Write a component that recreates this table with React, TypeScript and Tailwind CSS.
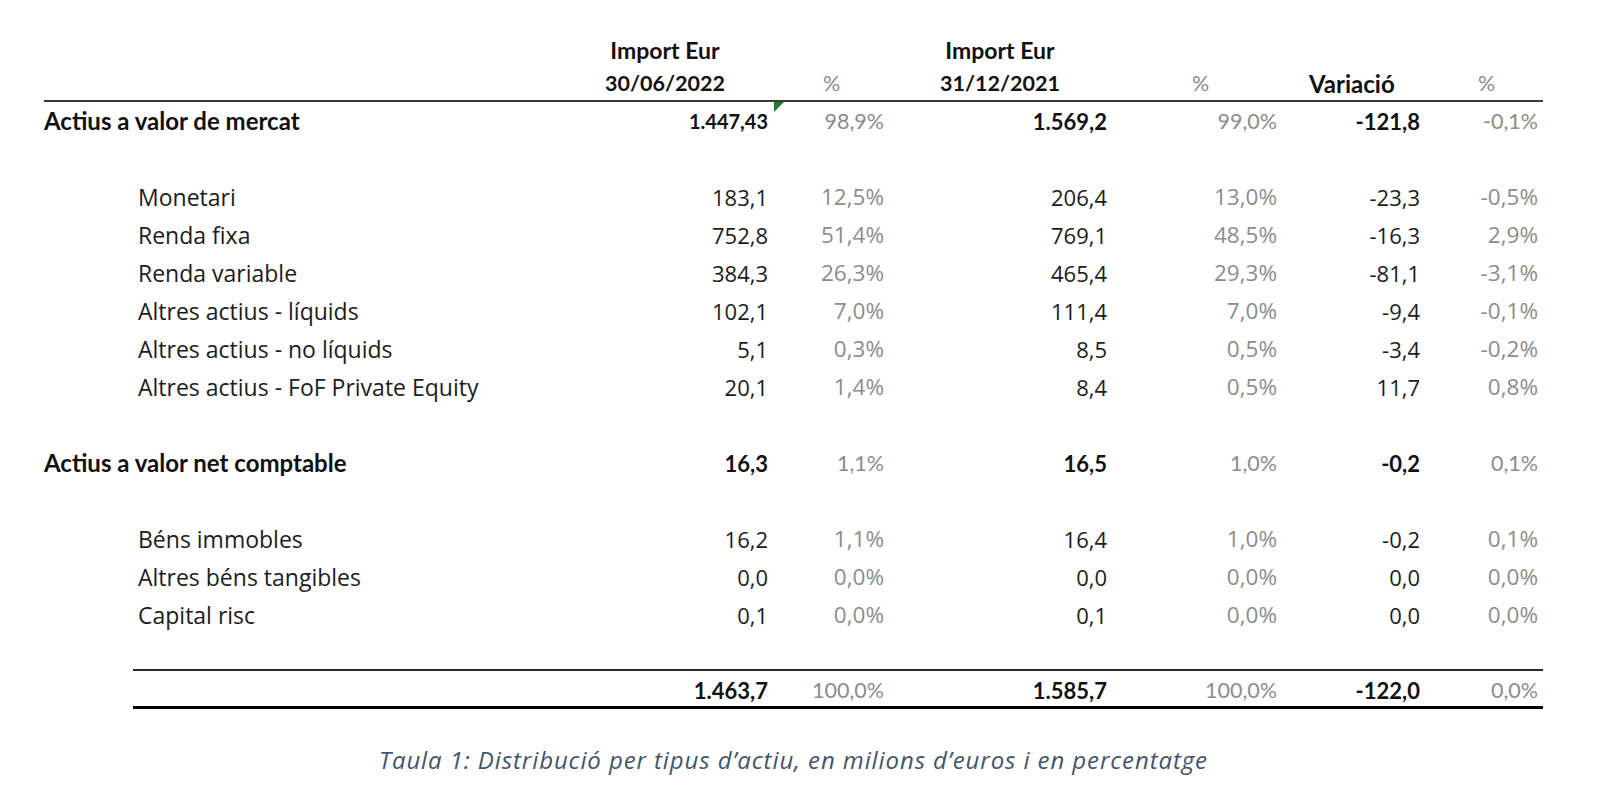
import React from 'react'

const cols = 'grid grid-cols-[616px_108px_116px_223px_170px_143px_118px]'
const headCols = 'grid grid-cols-[562px_118px_99px_119px_116px_134px_117px_169px_1fr]'

type Row = {
  label: string
  v: [string, string, string, string, string, string]
  main?: boolean
  flag?: boolean
}

const rows: (Row | null)[] = [
  { label: 'Actius a valor de mercat', v: ['1.447,43', '98,9%', '1.569,2', '99,0%', '-121,8', '-0,1%'], main: true, flag: true },
  null,
  { label: 'Monetari', v: ['183,1', '12,5%', '206,4', '13,0%', '-23,3', '-0,5%'] },
  { label: 'Renda fixa', v: ['752,8', '51,4%', '769,1', '48,5%', '-16,3', '2,9%'] },
  { label: 'Renda variable', v: ['384,3', '26,3%', '465,4', '29,3%', '-81,1', '-3,1%'] },
  { label: 'Altres actius - líquids', v: ['102,1', '7,0%', '111,4', '7,0%', '-9,4', '-0,1%'] },
  { label: 'Altres actius - no líquids', v: ['5,1', '0,3%', '8,5', '0,5%', '-3,4', '-0,2%'] },
  { label: 'Altres actius - FoF Private Equity', v: ['20,1', '1,4%', '8,4', '0,5%', '11,7', '0,8%'] },
  null,
  { label: 'Actius a valor net comptable', v: ['16,3', '1,1%', '16,5', '1,0%', '-0,2', '0,1%'], main: true },
  null,
  { label: 'Béns immobles', v: ['16,2', '1,1%', '16,4', '1,0%', '-0,2', '0,1%'] },
  { label: 'Altres béns tangibles', v: ['0,0', '0,0%', '0,0', '0,0%', '0,0', '0,0%'] },
  { label: 'Capital risc', v: ['0,1', '0,0%', '0,1', '0,0%', '0,0', '0,0%'] },
]

const calibri = "font-['Lato','Liberation_Sans',sans-serif]"
const segoe = "font-['Open_Sans','Noto_Sans',sans-serif]"

function DataRow({ row }: { row: Row }) {
  const font = row.main ? calibri : segoe
  const num = row.main ? 'font-bold text-[#111] text-[22px]' : 'text-[#1c1c1c] text-[22px]'
  const pct = row.main ? 'text-[#8c8c8c] text-[21.5px]' : 'text-[#8c8c8c] text-[22.5px]'
  // la primera xifra del full té una mida de lletra més petita
  const first = row.flag ? 'font-bold text-[#111] text-[20px]' : num
  return (
    <div className={`${cols} h-[38px] items-center ${font}`}>
      <div className={row.main ? 'font-bold text-[24px] text-[#111]' : 'pl-[94px] text-[23px] text-[#1c1c1c]'}>
        {row.label}
      </div>
      <div className={`text-right ${first}`}>{row.v[0]}</div>
      <div className={`relative h-full flex items-center justify-end ${pct}`}>
        {row.flag ? (
          <span className="absolute left-[6px] top-0 w-0 h-0 border-t-[10px] border-t-[#1e7b34] border-r-[10px] border-r-transparent" />
        ) : null}
        {row.v[1]}
      </div>
      <div className={`text-right ${num}`}>{row.v[2]}</div>
      <div className={`text-right ${pct}`}>{row.v[3]}</div>
      <div className={`text-right ${num}`}>{row.v[4]}</div>
      <div className={`text-right ${pct}`}>{row.v[5]}</div>
    </div>
  )
}

function DateHead({ date }: { date: string }) {
  return (
    <div className="flex flex-col items-center font-bold text-[#111] whitespace-nowrap">
      <span className="h-[33px] leading-[33px] text-[23px]">Import Eur</span>
      <span className="h-[33px] leading-[33px] text-[21.5px]">{date}</span>
    </div>
  )
}

function PctHead({ children }: { children: React.ReactNode }) {
  return (
    <div className="flex flex-col whitespace-nowrap">
      <span className="h-[33px]" />
      <span className="h-[33px] leading-[33px]">{children}</span>
    </div>
  )
}

export default function App() {
  return (
    <div className="w-[1602px] h-[795px] bg-white overflow-hidden">
      <div className="ml-[44px] w-[1499px] pt-[34px]">
        {/* capçalera */}
        <div className={`${headCols} ${calibri} text-[21.5px]`}>
          <div />
          <DateHead date="30/06/2022" />
          <div />
          <PctHead>
            <span className="text-[#8c8c8c]">%</span>
          </PctHead>
          <DateHead date="31/12/2021" />
          <div />
          <PctHead>
            <span className="text-[#8c8c8c]">%</span>
          </PctHead>
          <PctHead>
            <span className="font-bold text-[#111] text-[24px]">Variació</span>
          </PctHead>
          <PctHead>
            <span className="text-[#8c8c8c]">%</span>
          </PctHead>
        </div>
        <div className="border-t-2 border-[#3a3a3a]" />
        {rows.map((r, i) => (r ? <DataRow key={i} row={r} /> : <div key={i} className="h-[38px]" />))}

        {/* total */}
        <div className="ml-[89px] mt-[35px] border-t-2 border-[#2a2a2a] border-b-[3px] border-b-black">
          <div className={`${cols} ml-[-89px] h-[35px] pt-[3px] items-center ${calibri}`}>
            <div />
            <div className="text-right font-bold text-[#111] text-[22px]">1.463,7</div>
            <div className="text-right text-[#8c8c8c] text-[21.5px]">100,0%</div>
            <div className="text-right font-bold text-[#111] text-[22px]">1.585,7</div>
            <div className="text-right text-[#8c8c8c] text-[21.5px]">100,0%</div>
            <div className="text-right font-bold text-[#111] text-[22px]">-122,0</div>
            <div className="text-right text-[#8c8c8c] text-[21.5px]">0,0%</div>
          </div>
        </div>

        <p className={`mt-[36px] text-center italic text-[24px] tracking-[0.9px] leading-[30px] text-[#44546a] ${segoe}`}>
          Taula 1: Distribució per tipus d’actiu, en milions d’euros i en percentatge
        </p>
      </div>
    </div>
  )
}
